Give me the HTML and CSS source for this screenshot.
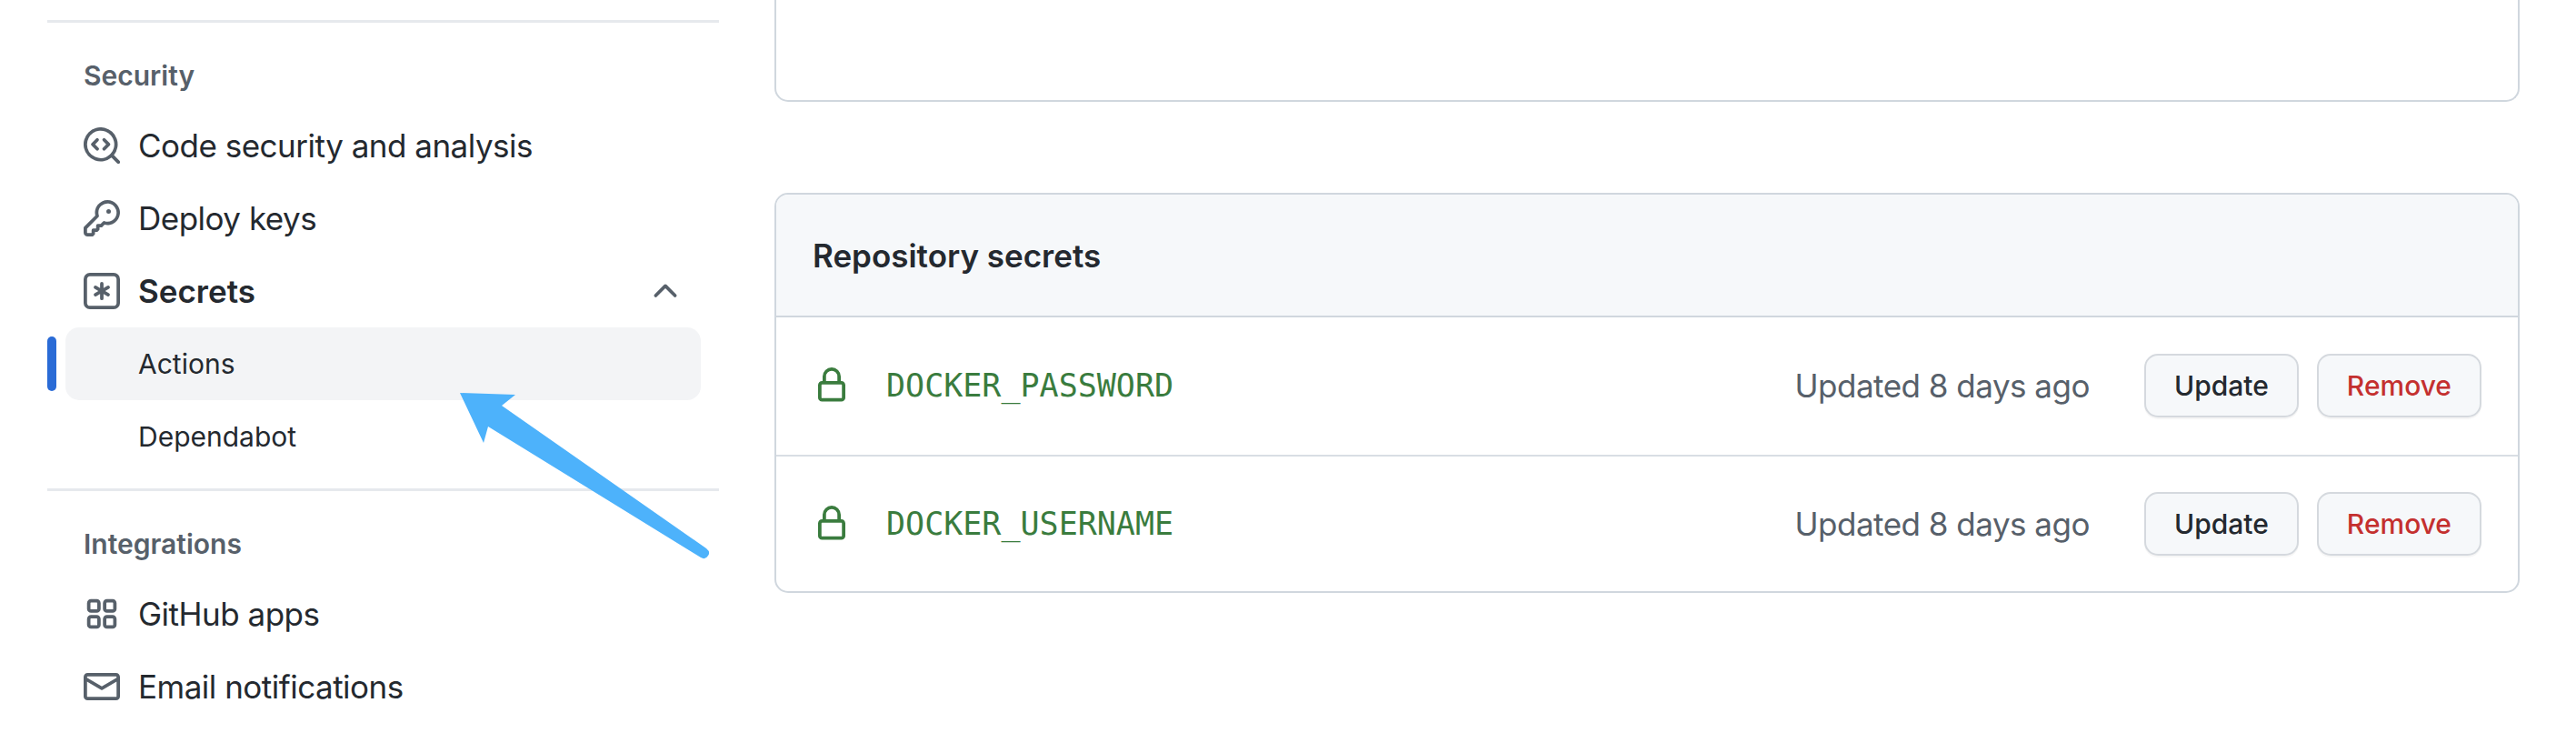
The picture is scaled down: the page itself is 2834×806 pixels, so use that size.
FILE: index.html
```html
<!DOCTYPE html>
<html lang="en">

<head>
	<meta charset="UTF-8" />
	<title>Actions secrets</title>
	<link rel="stylesheet" href="styles.css">
</head>

<body>
	<div class="page">
		<nav class="sidebar">
			<div class="nav-group">
				<h3 class="nav-heading">Security</h3>
				<a class="nav-item">
					<svg class="icon" viewBox="0 0 16 16"><path d="M8.47 4.97a.75.75 0 0 0 0 1.06L9.94 7.5 8.47 8.97a.75.75 0 1 0 1.06 1.06l2-2a.75.75 0 0 0 0-1.06l-2-2a.75.75 0 0 0-1.06 0ZM6.53 6.03a.75.75 0 0 0-1.06-1.06l-2 2a.75.75 0 0 0 0 1.06l2 2a.75.75 0 1 0 1.06-1.06L5.06 7.5l1.47-1.47Z"/><path d="M12.246 13.307a7.501 7.501 0 1 1 1.06-1.06l2.474 2.473a.749.749 0 0 1-.326 1.275.749.749 0 0 1-.734-.215ZM1.5 7.5a6.002 6.002 0 0 0 3.608 5.504 6.002 6.002 0 0 0 6.486-1.117.748.748 0 0 1 .292-.293A6 6 0 1 0 1.5 7.5Z"/></svg>
					Code security and analysis
				</a>
				<a class="nav-item">
					<svg class="icon" viewBox="0 0 16 16"><path d="M10.5 0a5.499 5.499 0 1 1-1.288 10.848l-.932.932a.749.749 0 0 1-.53.22H7v.75a.749.749 0 0 1-.22.53l-.5.5a.749.749 0 0 1-.53.22H5v.75a.749.749 0 0 1-.22.53l-.5.5a.749.749 0 0 1-.53.22h-2A1.75 1.75 0 0 1 0 14.25v-2c0-.199.079-.389.22-.53l4.932-4.932A5.5 5.5 0 0 1 10.5 0Zm-4 5.5c-.001.431.069.86.205 1.269a.75.75 0 0 1-.181.768L1.5 12.56v1.69c0 .138.112.25.25.25h1.69l.06-.06v-1.19a.75.75 0 0 1 .75-.75h1.19l.06-.06v-1.19a.75.75 0 0 1 .75-.75h1.19l1.023-1.025a.75.75 0 0 1 .768-.18A4 4 0 1 0 6.5 5.5ZM11 6a1 1 0 1 1 0-2 1 1 0 0 1 0 2Z"/></svg>
					Deploy keys
				</a>
				<a class="nav-item nav-item-open">
					<svg class="icon" viewBox="0 0 16 16"><path d="M0 2.75A2.75 2.75 0 0 1 2.75 0h10.5A2.75 2.75 0 0 1 16 2.75v10.5A2.75 2.75 0 0 1 13.25 16H2.75A2.75 2.75 0 0 1 0 13.25ZM2.75 1.5c-.69 0-1.25.56-1.25 1.25v10.5c0 .69.56 1.25 1.25 1.25h10.5c.69 0 1.25-.56 1.25-1.25V2.75c0-.69-.56-1.25-1.25-1.25Z"/><path d="M8 4a.75.75 0 0 1 .75.75V6.7l1.69-.975a.75.75 0 0 1 .75 1.3L9.5 8l1.69.976a.75.75 0 0 1-.75 1.298L8.75 9.299v1.951a.75.75 0 0 1-1.5 0V9.299l-1.69.975a.75.75 0 0 1-.75-1.298L6.5 8l-1.69-.975a.75.75 0 0 1 .75-1.3l1.69.976V4.75A.75.75 0 0 1 8 4Z"/></svg>
					<span class="nav-label">Secrets</span>
					<svg class="icon chevron" viewBox="0 0 16 16"><path d="M3.22 10.53a.749.749 0 0 1 0-1.06l4.25-4.25a.749.749 0 0 1 1.06 0l4.25 4.25a.749.749 0 0 1-1.06 1.06L8 6.811 4.28 10.53a.749.749 0 0 1-1.06 0Z"/></svg>
				</a>
				<div class="sub-row">
					<span class="sub-marker"></span>
					<a class="sub-item sub-item-active">Actions</a>
				</div>
				<div class="sub-row">
					<span class="sub-marker-empty"></span>
					<a class="sub-item">Dependabot</a>
				</div>
			</div>
			<div class="nav-group">
				<h3 class="nav-heading">Integrations</h3>
				<a class="nav-item">
					<svg class="icon" viewBox="0 0 16 16"><path d="M1.5 3.25c0-.966.784-1.75 1.75-1.75h2.5c.966 0 1.75.784 1.75 1.75v2.5A1.75 1.75 0 0 1 5.75 7.5h-2.5A1.75 1.75 0 0 1 1.5 5.75Zm7 0c0-.966.784-1.75 1.75-1.75h2.5c.966 0 1.75.784 1.75 1.75v2.5a1.75 1.75 0 0 1-1.75 1.75h-2.5A1.75 1.75 0 0 1 8.5 5.75Zm-7 7c0-.966.784-1.75 1.75-1.75h2.5c.966 0 1.75.784 1.75 1.75v2.5a1.75 1.75 0 0 1-1.75 1.75h-2.5a1.75 1.75 0 0 1-1.75-1.75Zm7 0c0-.966.784-1.75 1.75-1.75h2.5c.966 0 1.75.784 1.75 1.75v2.5a1.75 1.75 0 0 1-1.75 1.75h-2.5a1.75 1.75 0 0 1-1.75-1.75ZM3.25 3a.25.25 0 0 0-.25.25v2.5c0 .138.112.25.25.25h2.5A.25.25 0 0 0 6 5.75v-2.5A.25.25 0 0 0 5.75 3Zm7 0a.25.25 0 0 0-.25.25v2.5c0 .138.112.25.25.25h2.5a.25.25 0 0 0 .25-.25v-2.5a.25.25 0 0 0-.25-.25Zm-7 7a.25.25 0 0 0-.25.25v2.5c0 .138.112.25.25.25h2.5a.25.25 0 0 0 .25-.25v-2.5a.25.25 0 0 0-.25-.25Zm7 0a.25.25 0 0 0-.25.25v2.5c0 .138.112.25.25.25h2.5a.25.25 0 0 0 .25-.25v-2.5a.25.25 0 0 0-.25-.25Z"/></svg>
					GitHub apps
				</a>
				<a class="nav-item">
					<svg class="icon" viewBox="0 0 16 16"><path d="M1.75 2h12.5c.966 0 1.75.784 1.75 1.75v8.5A1.75 1.75 0 0 1 14.25 14H1.75A1.75 1.75 0 0 1 0 12.25v-8.5C0 2.784.784 2 1.75 2ZM1.5 12.251c0 .138.112.25.25.25h12.5a.25.25 0 0 0 .25-.25V5.809L8.38 9.397a.75.75 0 0 1-.76 0L1.5 5.809v6.442Zm13-8.181v-.32a.25.25 0 0 0-.25-.25H1.75a.25.25 0 0 0-.25.25v.32L8 7.88Z"/></svg>
					Email notifications
				</a>
			</div>
		</nav>

		<main class="content">
			<div class="top-box"></div>

			<section class="secrets-box">
				<div class="secrets-header">Repository secrets</div>
				<div class="secret-row">
					<svg class="icon lock" viewBox="0 0 16 16"><path d="M4 4a4 4 0 0 1 8 0v2h.25c.966 0 1.75.784 1.75 1.75v5.5A1.75 1.75 0 0 1 12.25 15h-8.5A1.75 1.75 0 0 1 2 13.25v-5.5C2 6.784 2.784 6 3.75 6H4Zm8.25 3.5h-8.5a.25.25 0 0 0-.25.25v5.5c0 .138.112.25.25.25h8.5a.25.25 0 0 0 .25-.25v-5.5a.25.25 0 0 0-.25-.25ZM10.5 6V4a2.5 2.5 0 1 0-5 0v2Z"/></svg>
					<code class="secret-name">DOCKER_PASSWORD</code>
					<span class="secret-date">Updated 8 days ago</span>
					<button class="btn btn-update">Update</button>
					<button class="btn btn-remove">Remove</button>
				</div>
				<div class="secret-row">
					<svg class="icon lock" viewBox="0 0 16 16"><path d="M4 4a4 4 0 0 1 8 0v2h.25c.966 0 1.75.784 1.75 1.75v5.5A1.75 1.75 0 0 1 12.25 15h-8.5A1.75 1.75 0 0 1 2 13.25v-5.5C2 6.784 2.784 6 3.75 6H4Zm8.25 3.5h-8.5a.25.25 0 0 0-.25.25v5.5c0 .138.112.25.25.25h8.5a.25.25 0 0 0 .25-.25v-5.5a.25.25 0 0 0-.25-.25ZM10.5 6V4a2.5 2.5 0 1 0-5 0v2Z"/></svg>
					<code class="secret-name">DOCKER_USERNAME</code>
					<span class="secret-date">Updated 8 days ago</span>
					<button class="btn btn-update">Update</button>
					<button class="btn btn-remove">Remove</button>
				</div>
			</section>
		</main>
	</div>

	<!-- annotation drawn on top of the screenshot -->
	<svg class="arrow" viewBox="0 0 2834 806"><path d="M506 432 L567 434 L552 446 L777 603 Q782 607 779 611 Q776 616 771 613 L537 469 L532 487 Z"/></svg>
</body>

</html>
```

FILE: styles.css
```css
* {
	box-sizing: border-box;
}

body {
	margin: 0;
	height: 806px;
	overflow: hidden;
	background-color: #fff;
	color: #24292f;
	font-family: Inter, "Liberation Sans", sans-serif;
	font-size: 35px;
	letter-spacing: -0.5px;
}

.page {
	display: flex;
	gap: 61px;
	padding: 0 62px 0 52px;
}

/* sidebar */

.sidebar {
	width: 739px;
	flex-shrink: 0;
	padding-top: 22px;
}

.nav-group {
	border-top: 3px solid #e6e9ed;
	padding-bottom: 17px;
}

.nav-heading {
	margin: 0;
	padding: 36px 0 15px 40px;
	font-size: 30px;
	line-height: 44px;
	font-weight: 600;
	letter-spacing: 0;
	color: #57606a;
}

.nav-item {
	display: flex;
	align-items: center;
	gap: 20px;
	height: 80px;
	padding: 0 39px 0 40px;
}

.nav-item-open {
	font-weight: 600;
	letter-spacing: 0;
}

.nav-label {
	flex: 1;
}

.icon {
	width: 40px;
	height: 40px;
	flex-shrink: 0;
	fill: #57606a;
}

.sub-row {
	display: flex;
	align-items: center;
	gap: 10px;
	height: 80px;
}

.sub-marker {
	width: 10px;
	height: 60px;
	border-radius: 5px;
	background-color: #2a6bd6;
}

.sub-marker-empty {
	width: 10px;
}

.sub-item {
	display: flex;
	align-items: center;
	width: 699px;
	height: 80px;
	padding-left: 80px;
	font-size: 30px;
	letter-spacing: 0;
	border-radius: 15px;
}

.sub-item-active {
	background-color: #f3f4f6;
}

/* main column */

.content {
	flex: 1;
}

.top-box {
	height: 112px;
	border: 2px solid #d0d7de;
	border-top: 0;
	border-radius: 0 0 15px 15px;
	margin-bottom: 100px;
}

.secrets-box {
	border: 2px solid #d0d7de;
	border-radius: 15px;
	overflow: hidden;
}

.secrets-header {
	display: flex;
	align-items: center;
	height: 135px;
	padding-left: 40px;
	background-color: #f6f8fa;
	border-bottom: 2px solid #d0d7de;
	font-weight: 600;
	letter-spacing: 0;
}

.secret-row {
	display: flex;
	align-items: center;
	height: 150.5px;
	padding: 0 40px 0 41px;
	border-top: 2px solid #d8dee4;
}

.secrets-header + .secret-row {
	border-top: 0;
}

.lock {
	fill: #3a7c3e;
}

.secret-name {
	flex: 1;
	margin-left: 40px;
	font-family: "DejaVu Sans Mono", "Liberation Mono", monospace;
	font-size: 35px;
	letter-spacing: 0;
	color: #3a7c3e;
}

.secret-date {
	color: #57606a;
	margin-right: 60px;
}

.btn {
	height: 70px;
	padding: 0 31px;
	font-family: inherit;
	font-size: 30px;
	font-weight: 500;
	background-color: #f6f8fa;
	border: 2px solid #d5d9de;
	border-radius: 15px;
	box-shadow: 0 2px 0 rgba(27, 31, 36, 0.04);
}

.btn-update {
	color: #24292f;
}

.btn-remove {
	margin-left: 20px;
	color: #c4302f;
}

/* arrow annotation */

.arrow {
	position: absolute;
	top: 0;
	left: 0;
	width: 2834px;
	height: 806px;
	fill: #4db2fb;
}
```
